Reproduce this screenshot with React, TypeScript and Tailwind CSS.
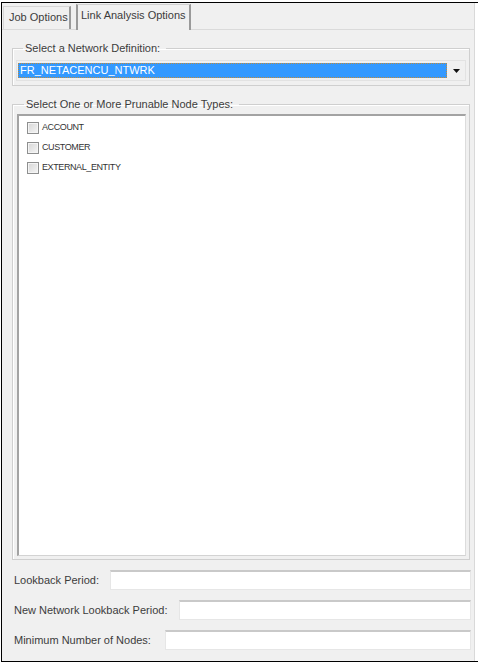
import React from "react";

const font = { fontFamily: '"Liberation Sans", Arial, sans-serif' };

const nodeTypes = ["ACCOUNT", "CUSTOMER", "EXTERNAL_ENTITY"];

const fields = [
  { label: "Lookback Period:", left: "w-[96px]" },
  { label: "New Network Lookback Period:", left: "w-[165px]" },
  { label: "Minimum Number of Nodes:", left: "w-[151px]" },
];

const Checkbox = () => (
  <span className="w-[12px] h-[12px] border border-[#8e8f8f] bg-gradient-to-br from-[#d6d6d6] to-[#f5f5f5] shadow-[inset_0_0_0_1px_#f4f4f4]" />
);

export default function App() {
  return (
    <div className="w-[478px] h-[663px] bg-white pt-[2px] pl-[1px]" style={font}>
      <div className="w-[477px] h-[660px] border-t border-l border-b border-black bg-white flex">
        <div className="w-[473px] h-full bg-[#f0f0f0] border-r border-[#d9d9d9] flex flex-col text-[11px] text-[#3c3c3c]">
          {/* tabs */}
          <div className="h-[27px] flex items-end pl-[1px] border-b border-[#dadada]">
            <div className="h-[23px] w-[68px] border-t border-l border-[#d6d6d6] border-r-2 border-r-[#9a9a9a] pl-[5px] pt-[4px] leading-[13px]">
              Job Options
            </div>
            <div className="ml-[5px] h-[26px] w-[115px] border-t border-l-2 border-[#d0d0d0] border-l-[#9a9a9a] border-r-2 border-r-[#9a9a9a] pl-[3px] pt-[4px] leading-[13px] bg-[#f0f0f0] -mb-px">
              Link Analysis Options
            </div>
          </div>

          <div className="flex flex-col pl-[10px] pt-[12px]">
            {/* network definition */}
            <fieldset className="w-[458px] h-[44px] border border-[#cfcfcf] shadow-[inset_1px_1px_0_#ffffff] px-[3px]">
              <legend className="ml-[7px] px-[2px] pr-[6px] leading-[13px]">Select a Network Definition:</legend>
              <div className="mt-[5px] h-[21px] w-[450px] border border-[#e2e2e2] bg-[#f0f0f0] flex items-center pl-[1px]">
                <div className="h-[15px] w-[429px] bg-[#3399ff] outline outline-1 outline-dotted outline-[#c08a3a] -outline-offset-1 text-white leading-[15px] pl-[2px]">
                  FR_NETACENCU_NTWRK
                </div>
                <div className="flex-1 flex justify-center">
                  <svg width="7" height="4" viewBox="0 0 7 4">
                    <path d="M0 0h7L3.5 4z" fill="#111" />
                  </svg>
                </div>
              </div>
            </fieldset>

            {/* node types */}
            <fieldset className="mt-[12px] w-[458px] h-[462px] border border-[#cfcfcf] shadow-[inset_1px_1px_0_#ffffff] pl-[4px] pr-[3px]">
              <legend className="ml-[7px] px-[2px] pr-[6px] leading-[13px]">
                Select One or More Prunable Node Types:
              </legend>
              <div className="mt-[3px] h-[442px] w-[449px] bg-white border-t-2 border-l-2 border-[#a3a3a3] border-r border-b border-r-[#dcdcdc] border-b-[#d3d3d3] pt-[2px] pl-[8px] flex flex-col">
                {nodeTypes.map((t) => (
                  <div key={t} className="h-[20px] flex items-center gap-[3px]">
                    <Checkbox />
                    <span className="text-[9px] tracking-[-0.4px] text-[#333]">{t}</span>
                  </div>
                ))}
              </div>
            </fieldset>
          </div>

          {/* bottom fields */}
          <div className="mt-[10px] pl-[12px] flex flex-col gap-[10px]">
            {fields.map((f) => (
              <div key={f.label} className="h-[20px] flex items-center">
                <span className={`${f.left} shrink-0`}>{f.label}</span>
                <div className="flex-1 mr-[3px] h-[20px] bg-white border border-[#e6e6e6] border-t-2 border-t-[#c9c9c9]" />
              </div>
            ))}
          </div>
        </div>
      </div>
    </div>
  );
}
